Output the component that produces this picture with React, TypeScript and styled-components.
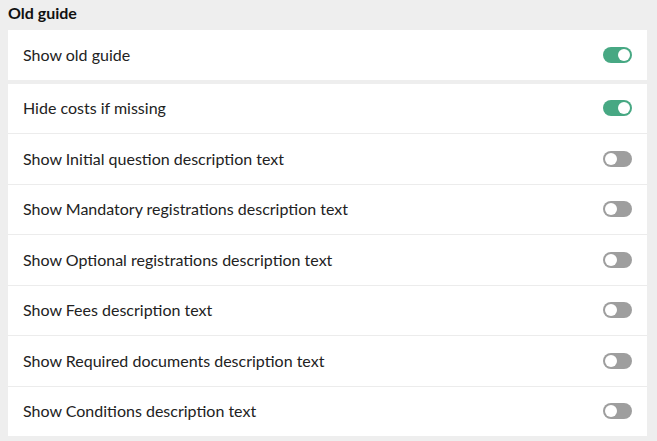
import React, {useState} from 'react';
import styled, {createGlobalStyle} from "styled-components";

const GlobalStyle = createGlobalStyle`
  html, body {
    margin: 0;
    padding: 0;
    background: #eeeeee;
    font-family: Lato, "Open Sans", sans-serif;
    color: #222222;
  }
`;

type Setting = {
  key: string;
  label: string;
  on: boolean;
};

const topSettings: Setting[] = [
  {key: "oldGuide", label: "Show old guide", on: true},
];

const guideSettings: Setting[] = [
  {key: "hideCosts", label: "Hide costs if missing", on: true},
  {key: "initialQuestion", label: "Show Initial question description text", on: false},
  {key: "mandatory", label: "Show Mandatory registrations description text", on: false},
  {key: "optional", label: "Show Optional registrations description text", on: false},
  {key: "fees", label: "Show Fees description text", on: false},
  {key: "documents", label: "Show Required documents description text", on: false},
  {key: "conditions", label: "Show Conditions description text", on: false},
];

const SettingsCard = ({items}: {items: Setting[]}) => {
  const [values, setValues] = useState(() =>
    Object.fromEntries(items.map((s) => [s.key, s.on]))
  );

  return (
    <Card>
      {items.map((item) => (
        <Row key={item.key}>
          <Label>{item.label}</Label>
          <Switch
            type="button"
            $on={values[item.key]}
            onClick={() => setValues({...values, [item.key]: !values[item.key]})}
          >
            <Knob $on={values[item.key]}/>
          </Switch>
        </Row>
      ))}
    </Card>
  );
};

const App = () => {
  return (
    <>
      <GlobalStyle/>
      <Page>
        <Heading>Old guide</Heading>
        <SettingsCard items={topSettings}/>
        <SettingsCard items={guideSettings}/>
      </Page>
    </>
  );
};

const Page = styled.div`
  display: flex;
  flex-direction: column;
  gap: 4px;
  padding: 0 10px 4px 8px;
`;
const Heading = styled.div`
  height: 26px;
  padding-top: 4px;
  box-sizing: border-box;
  font-size: 16px;
  font-weight: 700;
  line-height: 18px;
  color: #111111;
`;
const Card = styled.div`
  display: flex;
  flex-direction: column;
  background: #ffffff;
`;
const Row = styled.div`
  display: flex;
  align-items: center;
  justify-content: space-between;
  height: 49.5px;
  padding: 0 15px;

  & + & {
    border-top: 1px solid #ececec;
  }
`;
const Label = styled.span`
  font-size: 16px;
  line-height: 18px;
  color: #222222;
`;
const Switch = styled.button<{ $on: boolean }>`
  position: relative;
  width: 29px;
  height: 16px;
  padding: 0;
  border: none;
  border-radius: 8px;
  background: ${(p) => (p.$on ? "#47a883" : "#9e9e9e")};
  cursor: pointer;
`;
const Knob = styled.span<{ $on: boolean }>`
  position: absolute;
  top: 2px;
  left: ${(p) => (p.$on ? "15px" : "2px")};
  width: 12px;
  height: 12px;
  border-radius: 50%;
  background: #ffffff;
  transition: left 0.2s;
`;

export default App;
